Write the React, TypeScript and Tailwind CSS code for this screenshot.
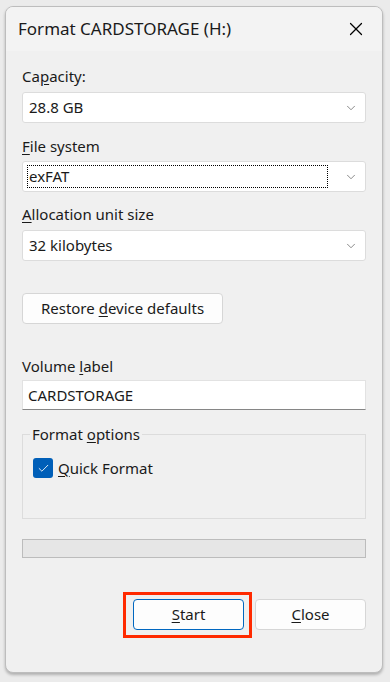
import { ChevronDown, X, Check } from "lucide-react";

const FONT = { fontFamily: '"Noto Sans", "Open Sans", sans-serif' };

function Key({ children }: { children: string }) {
  return <span className="underline underline-offset-2 decoration-1">{children}</span>;
}

function Combo({ value, focused }: { value: string; focused?: boolean }) {
  return (
    <div className="flex h-[31px] items-center rounded-[3px] border border-[#dcdcdc] bg-white pr-[7px]">
      <div className="flex flex-1 items-center pl-[4px]">
        <span
          className={
            focused
              ? "flex h-[23px] flex-1 items-center border border-dotted border-black pl-[1px]"
              : "pl-[2px]"
          }
        >
          {value}
        </span>
      </div>
      <div className="flex w-[30px] justify-end">
        <ChevronDown size={14} strokeWidth={1.25} className="text-[#5f5f5f]" />
      </div>
    </div>
  );
}

export default function App() {
  return (
    <div className="h-[682px] w-[390px] bg-[#ebebeb] pl-[5px] pt-[6px] text-[15px] text-[#1a1a1a]" style={FONT}>
      <div className="flex h-[667px] w-[378px] flex-col overflow-hidden rounded-[8px] border border-[#bdbdbd] bg-[#f0f0f0] shadow-[0_2px_3px_rgba(0,0,0,0.25)]">
        {/* title bar */}
        <div className="flex h-[44px] shrink-0 items-center justify-between bg-[#f3f3f3] pl-[12px] pr-[15px]">
          <span className="text-[17px]">Format CARDSTORAGE (H:)</span>
          <X size={22} strokeWidth={1.3} className="text-black" />
        </div>

        <div className="flex flex-col px-[16px]">
          <div className="mt-[15px] h-[20px] leading-[20px]">
            Ca<Key>p</Key>acity:
          </div>
          <div className="mt-[6px]">
            <Combo value="28.8 GB" />
          </div>

          <div className="mt-[13px] h-[20px] leading-[20px]">
            <Key>F</Key>ile system
          </div>
          <div className="mt-[5px]">
            <Combo value="exFAT" focused />
          </div>

          <div className="mt-[12px] h-[20px] leading-[20px]">
            <Key>A</Key>llocation unit size
          </div>
          <div className="mt-[6px]">
            <Combo value="32 kilobytes" />
          </div>

          <button className="mt-[32px] h-[31px] w-[201px] rounded-[4px] border border-[#d6d6d6] bg-[#fdfdfd] text-center text-[15px]">
            <span>
              Restore <Key>d</Key>evice defaults
            </span>
          </button>

          <div className="mt-[32px] h-[20px] leading-[20px]">
            Volume <Key>l</Key>abel
          </div>
          <div className="mt-[4px] flex h-[30px] items-center border-b border-b-[#868686] border-x border-t border-[#e2e2e2] bg-white pl-[5px]">
            CARDSTORAGE
          </div>

          <div className="relative mt-[24px] h-[85px] border border-[#dcdcdc]">
            <span className="absolute left-[7px] top-[-11px] bg-[#f0f0f0] px-[2px] leading-[20px]">
              Format <Key>o</Key>ptions
            </span>
            <div className="ml-[10px] mt-[23px] flex items-center gap-[5px]">
              <div className="flex h-[20px] w-[20px] items-center justify-center rounded-[3px] bg-[#005fb8]">
                <Check size={13} strokeWidth={1.6} className="text-white" />
              </div>
              <span className="leading-[20px]">
                <Key>Q</Key>uick Format
              </span>
            </div>
          </div>

          <div className="mt-[20px] h-[19px] border border-[#bcbcbc] bg-[#e6e6e6]" />

          <div className="mt-[34px] flex justify-end gap-[3px]">
            <div className="border-[3px] border-[#ff2a00] pb-[5px] pl-[7px] pr-[5px] pt-[4px]">
              <button className="flex h-[31px] w-[111px] items-center justify-center rounded-[4px] border border-[#0067c0] bg-[#fdfdfd]">
                <Key>S</Key>tart
              </button>
            </div>
            <div className="pt-[7px]">
              <button className="flex h-[31px] w-[111px] items-center justify-center rounded-[4px] border border-[#d6d6d6] bg-[#fdfdfd]">
                <Key>C</Key>lose
              </button>
            </div>
          </div>
        </div>
      </div>
    </div>
  );
}
